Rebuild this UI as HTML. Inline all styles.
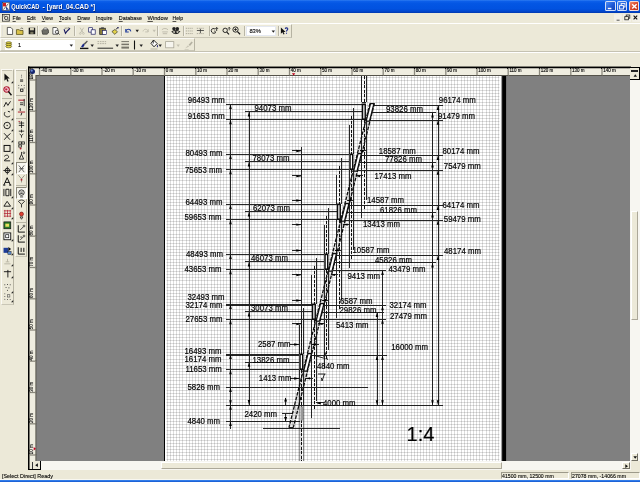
<!DOCTYPE html>
<html lang="en"><head><meta charset="utf-8"><title>QuickCAD - [yard_04.CAD *]</title>
<style>
html,body{margin:0;padding:0}
body{width:640px;height:482px;overflow:hidden;background:#ece9d8;position:relative;font-family:"Liberation Sans", sans-serif;color:#000}
#root{position:absolute;left:0;top:0;width:640px;height:482px;overflow:hidden;will-change:transform;background:#ece9d8}
.abs{position:absolute}
#title{left:0;top:0;width:640px;height:12.6px;background:linear-gradient(#2f7df2 0,#0c5fea 10%,#0356e4 28%,#0152e0 68%,#0248cf 86%,#0138ae 100%)}
#title .t{position:absolute;left:10.6px;top:1.9px;font-size:6.35px;font-weight:bold;color:#fff;white-space:nowrap;line-height:8px;text-shadow:.4px .4px 0 #0a246a}
.wb{position:absolute;top:1.2px;width:10.4px;height:10.2px;border-radius:1.6px;border:.5px solid rgba(255,255,255,.8);box-sizing:border-box;background:linear-gradient(135deg,#4b8df6,#1c56d4 60%,#1445b8)}
.wb.cl{background:linear-gradient(135deg,#ee8a6c,#d8452a 55%,#b5301a)}
#menubar{left:0;top:12.6px;width:640px;height:10px;background:#ece9d8}
.mi{position:absolute;top:1.7px;font-size:5.55px;line-height:7px;white-space:nowrap;-webkit-text-stroke:.12px #000}
.mi u{text-decoration-thickness:.35px;text-underline-offset:.5px;text-decoration-color:#444}
.ic{position:absolute;overflow:visible}
.hline{position:absolute;left:0;width:640px;height:.6px}
.tbx{position:absolute;box-sizing:border-box;border-right:.6px solid #b6b3a2;border-bottom:.6px solid #c9c6b6;border-top:.5px solid #fbfaf5;border-left:.5px solid #fbfaf5}
.sep{position:absolute;width:.6px;height:10.4px;background:#b9b6a6;box-shadow:.6px 0 0 #fbfaf5}
.grip{position:absolute;width:1.2px;height:10.6px;background:#c4c1b0;box-shadow:.5px 0 0 #fff inset}
.combo{position:absolute;background:#fff;border:.5px solid #cfd6e4;box-sizing:border-box}
.btn3{position:absolute;box-sizing:border-box;background:#ece9d8;border-top:.6px solid #fff;border-left:.6px solid #fff;border-right:.6px solid #716f64;border-bottom:.6px solid #716f64}
.st{position:absolute;font-size:5.5px;line-height:7px;white-space:nowrap;-webkit-text-stroke:.1px #000}
.sunk{position:absolute;box-sizing:border-box;border-top:.6px solid #9d9a8a;border-left:.6px solid #9d9a8a;border-right:.6px solid #fff;border-bottom:.6px solid #fff;height:7.6px;top:471.8px}
</style></head><body><div id="root">
<div id="title" class="abs"><svg class="ic" style="left:0;top:0" width="120" height="13" viewBox="0 0 120 13"><g font-family='"Liberation Sans", sans-serif' font-size="6.9" font-weight="bold"><g fill="#0a246a" transform="translate(.45 .45)"><text x="11.2" y="9.45" textLength="28.3" lengthAdjust="spacingAndGlyphs">QuickCAD</text><text x="42.5" y="9.45">-</text><text x="46.8" y="9.45" textLength="48.4" lengthAdjust="spacingAndGlyphs">[yard_04.CAD *]</text></g><g fill="#fff"><text x="11.2" y="9.45" textLength="28.3" lengthAdjust="spacingAndGlyphs">QuickCAD</text><text x="42.5" y="9.45">-</text><text x="46.8" y="9.45" textLength="48.4" lengthAdjust="spacingAndGlyphs">[yard_04.CAD *]</text></g></g></svg>
<svg class="ic" style="left:1.5px;top:2px" width="8" height="9" viewBox="0 0 8 9"><rect x=".3" y=".3" width="7.4" height="8.2" fill="#f4f4f4" stroke="#223" stroke-width=".5"/><path d="M1 1h3v3.4h-3z" fill="#d02020"/><path d="M4 4.4l3 3.4h-3z" fill="#204090"/><path d="M1.4 7.6l5-6" stroke="#333" stroke-width=".7"/></svg>
<div class="wb" style="left:605.3px"><svg width="9" height="9" viewBox="0 0 9 9" style="position:absolute;left:0;top:0"><rect x="1.8" y="5.8" width="3.6" height="1.4" fill="#fff"/></svg></div>
<div class="wb" style="left:617.1px"><svg width="9" height="9" viewBox="0 0 9 9" style="position:absolute;left:0;top:0"><rect x="3.2" y="1.6" width="3.8" height="3.4" fill="none" stroke="#fff" stroke-width=".9"/><rect x="1.6" y="3.6" width="3.8" height="3.4" fill="#2a62da" stroke="#fff" stroke-width=".9"/></svg></div>
<div class="wb cl" style="left:628.7px"><svg width="9" height="9" viewBox="0 0 9 9" style="position:absolute;left:0;top:0"><path d="M2.2 2.2l4.4 4.4M6.6 2.2l-4.4 4.4" stroke="#fff" stroke-width="1.4"/></svg></div>
</div>
<div id="menubar" class="abs">
<svg class="ic" style="left:2.2px;top:1.2px" width="8" height="8" viewBox="0 0 8 8"><rect x=".4" y=".6" width="7.2" height="6.6" fill="#e9e7da" stroke="#222" stroke-width=".7"/><circle cx="4.2" cy="4" r="1.7" fill="none" stroke="#222" stroke-width=".8"/><path d="M1.4 2h1.4M5.6 6h1.2" stroke="#222" stroke-width=".7"/></svg>
<svg class="ic" style="left:0;top:-12.6px" width="200" height="24" viewBox="0 0 200 24"><g font-family='"Liberation Sans", sans-serif' font-size="6.1" fill="#000" stroke="#000" stroke-width=".1"><text x="12.6" y="20.2" textLength="8.4" lengthAdjust="spacingAndGlyphs"><tspan text-decoration="underline">F</tspan>ile</text><text x="27.0" y="20.2" textLength="8.7" lengthAdjust="spacingAndGlyphs"><tspan text-decoration="underline">E</tspan>dit</text><text x="41.8" y="20.2" textLength="11.2" lengthAdjust="spacingAndGlyphs"><tspan text-decoration="underline">V</tspan>iew</text><text x="59.0" y="20.2" textLength="12.0" lengthAdjust="spacingAndGlyphs"><tspan text-decoration="underline">T</tspan>ools</text><text x="77.2" y="20.2" textLength="12.8" lengthAdjust="spacingAndGlyphs"><tspan text-decoration="underline">D</tspan>raw</text><text x="96.0" y="20.2" textLength="16.6" lengthAdjust="spacingAndGlyphs"><tspan text-decoration="underline">I</tspan>nquire</text><text x="118.8" y="20.2" textLength="23.2" lengthAdjust="spacingAndGlyphs"><tspan text-decoration="underline">D</tspan>atabase</text><text x="147.5" y="20.2" textLength="20.3" lengthAdjust="spacingAndGlyphs"><tspan text-decoration="underline">W</tspan>indow</text><text x="172.6" y="20.2" textLength="10.5" lengthAdjust="spacingAndGlyphs"><tspan text-decoration="underline">H</tspan>elp</text></g></svg>
<svg class="ic" style="left:614px;top:1.2px" width="26" height="8" viewBox="0 0 26 8"><rect x="0" y=".2" width="7.8" height="7.6" fill="#f3f1e8"/><rect x="9" y=".2" width="8" height="7.6" fill="#f3f1e8"/><rect x="18.2" y=".2" width="7.8" height="7.6" fill="#f3f1e8"/><path d="M2.6 6.2h3" stroke="#555" stroke-width="1"/><rect x="12.2" y="1" width="3.6" height="3.2" fill="none" stroke="#222" stroke-width=".8"/><rect x="10.8" y="2.6" width="3.6" height="3.2" fill="#ece9d8" stroke="#222" stroke-width=".8"/><path d="M19.6 1.6l3.6 3.8M23.2 1.6l-3.6 3.8" stroke="#111" stroke-width="1.1"/></svg>
</div>
<div class="hline" style="top:22.5px;background:#c5c2b2"></div><div class="hline" style="top:23.1px;background:#fff"></div>
<div class="hline" style="top:37.4px;background:#d6d3c4;width:292px"></div>
<div class="hline" style="top:51px;background:#c5c2b2"></div><div class="hline" style="top:51.6px;background:#fff"></div>
<div class="tbx" style="left:0;top:23.8px;width:292px;height:13.8px"></div>
<div class="tbx" style="left:0;top:38px;width:194.5px;height:13px"></div>
<div class="grip" style="left:1.6px;top:25.4px"></div><div class="grip" style="left:1.6px;top:39.4px"></div>
<div class="sep" style="left:37.4px;top:25.6px"></div><div class="sep" style="left:74.2px;top:25.6px"></div><div class="sep" style="left:121.2px;top:25.6px"></div>
<div class="sep" style="left:157.4px;top:25.6px"></div><div class="sep" style="left:182.8px;top:25.6px"></div><div class="sep" style="left:208.6px;top:25.6px"></div>
<div class="sep" style="left:243.6px;top:25.6px"></div><div class="sep" style="left:277.8px;top:25.6px"></div>

<div class="combo" style="left:245.8px;top:26px;width:30px;height:10px;border-color:#e4e8f0"><span class="st" style="left:2.6px;top:1.3px;font-size:5.8px">83%</span><svg class="ic" style="left:24px;top:3.4px" width="5" height="4" viewBox="0 0 5 4"><path d="M.6.6h3.4l-1.7 2.2z" fill="#222"/></svg></div>
<div class="combo" style="left:4.6px;top:40px;width:70.4px;height:10px;border-color:#fff"><span class="st" style="left:12.4px;top:1.2px">1</span><svg class="ic" style="left:63.4px;top:3.4px" width="5" height="4" viewBox="0 0 5 4"><path d="M.6.6h3.4l-1.7 2.2z" fill="#222"/></svg></div>
<svg class="ic" style="left:6.4px;top:26.6px" width="7.92" height="7.92" viewBox="0 0 9 9"><path d="M1.5 .5h4l2 2v6h-6z" fill="#fff" stroke="#222" stroke-width=".8"/></svg><svg class="ic" style="left:15.6px;top:26.6px" width="7.92" height="7.92" viewBox="0 0 9 9"><path d="M.5 3h3l1 1h3.5v4.5h-7.5z" fill="#d9c24a" stroke="#4a4410" stroke-width=".8"/><path d="M5 2.2c1-1.4 2.4-1.2 3 .2" fill="none" stroke="#222" stroke-width=".7"/></svg><svg class="ic" style="left:27.6px;top:26.6px" width="7.92" height="7.92" viewBox="0 0 9 9"><rect x=".8" y=".8" width="7.4" height="7.4" fill="#1c1c1c"/><rect x="2.3" y="1" width="4.4" height="2.8" fill="#d6d2b8"/><rect x="2.6" y="5.4" width="3.6" height="2.6" fill="#77745e"/></svg><svg class="ic" style="left:41.2px;top:26.6px" width="7.92" height="7.92" viewBox="0 0 9 9"><path d="M1 4.2l2-2h4.5l1 1.6v3l-1.6 1.4h-5z" fill="#6e6e66" stroke="#222" stroke-width=".7"/><path d="M2.6 3l1-2h3l.6 2z" fill="#eee" stroke="#222" stroke-width=".5"/></svg><svg class="ic" style="left:52.3px;top:26.6px" width="7.92" height="7.92" viewBox="0 0 9 9"><path d="M1 .6h4l1.6 1.6v6h-5.6z" fill="#fff" stroke="#222" stroke-width=".8"/><circle cx="5.6" cy="5.6" r="1.9" fill="#e8e8e8" stroke="#222" stroke-width=".8"/><path d="M7 7l1.6 1.6" stroke="#222" stroke-width="1"/></svg><svg class="ic" style="left:63.3px;top:26.6px" width="7.92" height="7.92" viewBox="0 0 9 9"><path d="M1.2 2.6l1.6 4.6 1.6-2.2 3.6-3.6" fill="none" stroke="#1b1b60" stroke-width="1.3"/><path d="M2 1.4h1M4 1.2h1M6 1h1" stroke="#222" stroke-width=".9"/></svg><svg class="ic" style="left:78.2px;top:26.6px" width="7.92" height="7.92" viewBox="0 0 9 9"><path d="M2.4.8l3.6 6M6.4.8l-3.6 6" stroke="#b8b5a6" stroke-width=".9"/><circle cx="2.6" cy="7.4" r="1" fill="none" stroke="#b8b5a6" stroke-width=".7"/><circle cx="6.2" cy="7.4" r="1" fill="none" stroke="#b8b5a6" stroke-width=".7"/></svg><svg class="ic" style="left:87.8px;top:26.6px" width="7.92" height="7.92" viewBox="0 0 9 9"><rect x=".8" y=".8" width="4.4" height="5" fill="#fff" stroke="#1b1b60" stroke-width=".8"/><rect x="3.6" y="3.2" width="4.6" height="5" fill="#fff" stroke="#1b1b60" stroke-width=".8"/></svg><svg class="ic" style="left:98.8px;top:26.6px" width="7.92" height="7.92" viewBox="0 0 9 9"><rect x=".8" y="1.4" width="6.4" height="7" fill="#8a7e3a" stroke="#222" stroke-width=".8"/><rect x="2.4" y=".4" width="3.2" height="1.8" fill="#444"/><rect x="4" y="4" width="4.4" height="4.6" fill="#fff" stroke="#1b1b60" stroke-width=".7"/></svg><svg class="ic" style="left:111px;top:26.6px" width="7.92" height="7.92" viewBox="0 0 9 9"><path d="M1 5.2l3.4-2.4 3 2.6-3 3z" fill="#e4d34a" stroke="#222" stroke-width=".7"/><path d="M5.6 2.6l2.4-2" stroke="#222" stroke-width="1"/><circle cx="8" cy=".9" r=".9" fill="#1b1b60"/></svg><svg class="ic" style="left:123.6px;top:26.6px" width="7.92" height="7.92" viewBox="0 0 9 9"><path d="M2 2.4v3.2h3.4M2 5.4c.8-3.6 5.2-3.6 5.8-.4" fill="none" stroke="#203c9c" stroke-width="1.2"/></svg><svg class="ic" style="left:134.5px;top:29px" width="5" height="4" viewBox="0 0 5 4"><path d="M.5 .8h3.4l-1.7 2.4z" fill="#222"/></svg><svg class="ic" style="left:142.3px;top:26.6px" width="7.92" height="7.92" viewBox="0 0 9 9"><path d="M7 2.4v3.2h-3.4M7 5.4c-.8-3.6-5.2-3.6-5.8-.4" fill="none" stroke="#c5c2b2" stroke-width="1.1"/></svg><svg class="ic" style="left:152px;top:29px" width="5" height="4" viewBox="0 0 5 4"><path d="M.5 .8h3.4l-1.7 2.4z" fill="#c5c2b2"/></svg><svg class="ic" style="left:160.6px;top:26.6px" width="7.92" height="7.92" viewBox="0 0 9 9"><path d="M1 3.2c1.4-2 5.4-2 7 0M1.4 5.6h6.4M2 7.6h5" fill="none" stroke="#b5b2a2" stroke-width=".9"/></svg><svg class="ic" style="left:170.6px;top:25.6px" width="9.68" height="8.8" viewBox="0 0 11 10"><circle cx="3.4" cy="3" r="2" fill="#222"/><circle cx="7.2" cy="3" r="2" fill="#222"/><path d="M1 6.4c2-1.6 7-1.6 9 0c-2 3-7 3-9 0z" fill="none" stroke="#111" stroke-width="1.1"/><circle cx="5.4" cy="7" r="1.2" fill="#222"/></svg><svg class="ic" style="left:184.9px;top:26.6px" width="8.8" height="7.92" viewBox="0 0 10 9"><path d="M1 1.5h8M1 4.5h8M1 7.5h8" stroke="#6a685c" stroke-width=".8" stroke-dasharray=".9 1.3"/></svg><svg class="ic" style="left:196px;top:26.6px" width="8.8" height="7.92" viewBox="0 0 10 9"><path d="M1 1.5h8M1 7.5h8" stroke="#6a685c" stroke-width=".8" stroke-dasharray=".9 1.3"/><path d="M1 4h8M5 2v5" stroke="#333" stroke-width=".9"/></svg><svg class="ic" style="left:210px;top:26.6px" width="8.8" height="7.92" viewBox="0 0 10 9"><path d="M1.4 4c0-2.4 3.4-3 4.4-1.4M1.4 4c0 2.8 3 4 4.8 2.6l-.8-2.4" fill="none" stroke="#111" stroke-width="1"/><path d="M7.6.6v4M6 2.2l1.6-1.6 1.6 1.6" fill="none" stroke="#111" stroke-width=".9"/></svg><svg class="ic" style="left:221.6px;top:26.6px" width="8.8" height="7.92" viewBox="0 0 10 9"><circle cx="3.6" cy="3.8" r="2.5" fill="none" stroke="#111" stroke-width="1"/><path d="M5.4 5.8l2.6 2.6" stroke="#111" stroke-width="1.2"/><path d="M8.2.4v3.4M6.8 1.8l1.4-1.4 1.2 1.4" fill="none" stroke="#111" stroke-width=".8"/></svg><svg class="ic" style="left:232.2px;top:26.1px" width="8.8" height="8.8" viewBox="0 0 10 10"><circle cx="4" cy="4" r="3" fill="none" stroke="#111" stroke-width="1"/><path d="M2.4 4h3.2M4 2.4v3.2" stroke="#111" stroke-width=".9"/><path d="M6.2 6.4l3 3" stroke="#111" stroke-width="1.4"/></svg><svg class="ic" style="left:280.4px;top:26.6px" width="8.8" height="7.92" viewBox="0 0 10 9"><path d="M1 .6v7l1.8-1.6 1.2 2.6 1.2-.6-1.2-2.4h2.4z" fill="#111"/><path d="M6 2.2c.2-1.6 3-1.6 2.8.2c-.2 1.2-1.4 1.2-1.4 2.6M7.4 6.6v1.2" fill="none" stroke="#1b2a8a" stroke-width="1.2"/></svg><svg class="ic" style="left:5.2px;top:41.1px" width="7.4" height="7.4" viewBox="0 0 9 9"><ellipse cx="4.5" cy="2.4" rx="3.6" ry="1.5" fill="#e6d84c" stroke="#3a3608" stroke-width=".7"/><ellipse cx="4.5" cy="4.6" rx="3.6" ry="1.5" fill="#e6d84c" stroke="#3a3608" stroke-width=".7"/><ellipse cx="4.5" cy="6.8" rx="3.6" ry="1.5" fill="#e6d84c" stroke="#3a3608" stroke-width=".7"/></svg><svg class="ic" style="left:79px;top:39.5px" width="11" height="10" viewBox="0 0 11 10"><path d="M1 8.4h8.4" stroke="#111" stroke-width="1.4"/><path d="M2 6.8l2.2-3.2 1.6 1.2-1.8 2.6z" fill="#1b2a8a"/><path d="M4.6 3.8l3.4-3.2.8.8-3 3.4z" fill="#555"/></svg><svg class="ic" style="left:90.4px;top:43.5px" width="5" height="4" viewBox="0 0 5 4"><path d="M.5 .6h3.4l-1.7 2.4z" fill="#222"/></svg><svg class="ic" style="left:114.6px;top:43.5px" width="5" height="4" viewBox="0 0 5 4"><path d="M.5 .6h3.4l-1.7 2.4z" fill="#222"/></svg><svg class="ic" style="left:139.2px;top:43.5px" width="5" height="4" viewBox="0 0 5 4"><path d="M.5 .6h3.4l-1.7 2.4z" fill="#222"/></svg><svg class="ic" style="left:158.4px;top:43.5px" width="5" height="4" viewBox="0 0 5 4"><path d="M.5 .6h3.4l-1.7 2.4z" fill="#222"/></svg><svg class="ic" style="left:176px;top:43.5px" width="5" height="4" viewBox="0 0 5 4"><path d="M.5 .6h3.4l-1.7 2.4z" fill="#c5c2b2"/></svg><svg class="ic" style="left:96.5px;top:40.0px" width="17" height="10" viewBox="0 0 17 10"><path d="M.5 1.6h8.6M.5 3.6h8.6" stroke="#a5a294" stroke-width=".8" stroke-dasharray="1.6 .8"/><path d="M.5 8.2h15.6" stroke="#111" stroke-width=".9"/></svg><svg class="ic" style="left:121px;top:40.0px" width="9" height="10" viewBox="0 0 9 10"><path d="M.4 1.6h7.6" stroke="#77756a" stroke-width="1"/><path d="M.4 4.4h7.6" stroke="#77756a" stroke-width="1.5"/><path d="M.4 7.6h7.6" stroke="#77756a" stroke-width="2"/></svg><svg class="ic" style="left:133px;top:39.5px" width="3" height="10" viewBox="0 0 3 10"><path d="M1.5 .5v9" stroke="#111" stroke-width="1.1"/></svg><svg class="ic" style="left:149.5px;top:39.0px" width="9" height="11" viewBox="0 0 9 11"><path d="M3.6 1l3.6 3.6-3.2 3.2-3-3.4z" fill="#fff" stroke="#111" stroke-width=".9"/><path d="M3.4 1.2l-.2 3.4" stroke="#111" stroke-width=".8"/><path d="M7.4 5.4c.8 1.2.8 2.4 0 3c-.8-.6-.8-1.8 0-3z" fill="#2a2a7a"/><path d="M.5 10h7" stroke="#b9b6a6" stroke-width="1"/></svg><svg class="ic" style="left:165px;top:41.0px" width="11" height="8" viewBox="0 0 11 8"><rect x=".6" y=".6" width="8.2" height="6.2" fill="#f6f5ee" stroke="#aaa798" stroke-width=".8"/></svg><svg class="ic" style="left:183.5px;top:40.0px" width="10" height="10" viewBox="0 0 10 10"><path d="M1 8.6l3-3.4 1.2 1.2z" fill="#c9c6b6"/><path d="M4.6 4.8l3-3.4 1.2 1-2.8 3.6z" fill="#b5b2a2"/><path d="M.6 9.6h4" stroke="#c9c6b6" stroke-width=".8"/></svg>
<div class="tbx" style="left:.6px;top:68.6px;width:13px;height:236px"></div>
<div class="tbx" style="left:14.8px;top:68.6px;width:12.6px;height:188px"></div>
<div class="hline" style="left:2px;top:70.4px;width:10px;background:#c4c1b0"></div><div class="hline" style="left:16px;top:70.4px;width:10px;background:#c4c1b0"></div>
<div class="hline" style="left:16px;top:95px;width:10px;background:#b9b6a6"></div>
<div class="hline" style="left:16px;top:117.8px;width:10px;background:#b9b6a6"></div>
<div class="hline" style="left:16px;top:185.2px;width:10px;background:#b9b6a6"></div>
<div class="hline" style="left:16px;top:221.6px;width:10px;background:#b9b6a6"></div>
<div class="hline" style="left:2px;top:98px;width:10px;background:#b9b6a6"></div>
<div class="btn3" style="left:15.6px;top:162.4px;width:11.4px;height:11.6px;border-color:#8a8778 #fff #fff #8a8778;background:#f6f5ee"></div>
<div class="btn3" style="left:15.6px;top:187px;width:11.4px;height:11.8px;border-color:#8a8778 #fff #fff #8a8778;background:#f6f5ee"></div>
<svg class="ic" style="left:3.2px;top:72.55px" width="9.0" height="9.9" viewBox="0 0 10 11"><path d="M1.6.6v8l2-1.8 1.4 3 1.3-.6-1.4-3h2.7z" fill="#111"/></svg><svg class="ic" style="left:2.6px;top:85.55px" width="9.0" height="9.9" viewBox="0 0 10 11"><circle cx="4" cy="3.8" r="3" fill="#fff" stroke="#b01830" stroke-width="1.3"/><rect x="2.4" y="2.6" width="2.6" height="2.4" fill="#c02040"/><path d="M6 6.2l3.4 4" stroke="#111" stroke-width="1.6"/></svg><svg class="ic" style="left:2.6px;top:100.0px" width="9.0" height="9.0" viewBox="0 0 10 10"><path d="M1 7.6l2.4-5 2 3.4 3-4.6" fill="none" stroke="#111" stroke-width="1"/></svg><svg class="ic" style="left:2.6px;top:110.3px" width="9.0" height="9.0" viewBox="0 0 10 10"><path d="M2.4 2.2c-3 3.4 2 7.6 5.6 4.2M5.4 1.4l2.4.8" fill="none" stroke="#111" stroke-width="1"/></svg><svg class="ic" style="left:2.6px;top:121.1px" width="9.0" height="9.0" viewBox="0 0 10 10"><circle cx="4.6" cy="5" r="3.6" fill="none" stroke="#111" stroke-width="1"/><circle cx="4.6" cy="5" r=".7" fill="#111"/></svg><svg class="ic" style="left:2.6px;top:132.1px" width="9.0" height="9.0" viewBox="0 0 10 10"><path d="M1.2 1.4l6.6 7.2M1.4 8.6l3-3.6 4-3.4" fill="none" stroke="#111" stroke-width="1"/></svg><svg class="ic" style="left:2.6px;top:143.5px" width="9.0" height="9.0" viewBox="0 0 10 10"><rect x="1.2" y="1.6" width="6.6" height="6.6" fill="none" stroke="#111" stroke-width="1.1"/></svg><svg class="ic" style="left:2.6px;top:154.0px" width="9.0" height="9.0" viewBox="0 0 10 10"><path d="M1.4 2.6c2.4-2.4 5.6-1.2 4.6 1.4c-.8 2-4.6 1-4.4 3.6h6.4" fill="none" stroke="#111" stroke-width="1"/></svg><svg class="ic" style="left:2.6px;top:165.5px" width="9.0" height="9.0" viewBox="0 0 10 10"><circle cx="4.8" cy="5" r="2.5" fill="none" stroke="#111" stroke-width="1"/><path d="M4.8.6v8.8M.4 5h8.8" stroke="#111" stroke-width=".9"/></svg><svg class="ic" style="left:2.6px;top:176.5px" width="9.0" height="9.0" viewBox="0 0 10 10"><path d="M1 9l3.6-8.2 3.6 8.2M2.4 6h4.6M.2 9h2.4M6.8 9h2.4" fill="none" stroke="#111" stroke-width="1.1"/></svg><svg class="ic" style="left:2.6px;top:188.0px" width="9.0" height="9.0" viewBox="0 0 10 10"><path d="M1 1v8M8.6 1v8M3.2 1.4h3.4v7.2h-3.4z" fill="none" stroke="#111" stroke-width="1"/></svg><svg class="ic" style="left:2.6px;top:199.25px" width="9.0" height="9.0" viewBox="0 0 10 10"><path d="M1 8l3.6-5.4 3.8 5.4z" fill="none" stroke="#111" stroke-width="1"/></svg><svg class="ic" style="left:2.6px;top:209.25px" width="9.0" height="9.0" viewBox="0 0 10 10"><path d="M1 2h8M1 5h8M1 8h8M2 1v8M5 1v8M8 1v8" stroke="#b02030" stroke-width=".8"/></svg><svg class="ic" style="left:2.6px;top:220.5px" width="9.0" height="9.0" viewBox="0 0 10 10"><rect x="1" y="1" width="7.6" height="7.6" fill="#2a7a2a" stroke="#111" stroke-width=".8"/><rect x="2.6" y="3" width="4.2" height="3.4" fill="#e8e060"/></svg><svg class="ic" style="left:2.6px;top:231.5px" width="9.0" height="9.0" viewBox="0 0 10 10"><rect x="1" y="1" width="7.6" height="7.6" fill="#fff" stroke="#111" stroke-width="1"/><rect x="3" y="3" width="3.4" height="3.4" fill="none" stroke="#111" stroke-width=".8"/></svg><svg class="ic" style="left:2.6px;top:245.5px" width="9.0" height="9.0" viewBox="0 0 10 10"><rect x=".6" y="2" width="5.4" height="5.6" fill="#1e3c96"/><path d="M6 1l3 2.4-3 2.4z" fill="#111"/><rect x="5.4" y="6" width="3.6" height="3.4" fill="#5a8ad0" stroke="#111" stroke-width=".5"/></svg><svg class="ic" style="left:2.6px;top:256.5px" width="9.0" height="9.0" viewBox="0 0 10 10"><path d="M1.4 7.6h7M3 5.4h4M5 2v3.4" stroke="#b5b2a2" stroke-width="1"/></svg><svg class="ic" style="left:2.6px;top:268.5px" width="9.0" height="9.0" viewBox="0 0 10 10"><path d="M1 3h8M5.4 1v8.4" stroke="#111" stroke-width="1"/></svg><svg class="ic" style="left:2.6px;top:283.0px" width="9.0" height="9.0" viewBox="0 0 10 10"><path d="M2 2h.01M5 1.6h.01M8 2h.01M3.4 5h.01M6.6 5.4h.01M5 8h.01" stroke="#333" stroke-width="1.2" stroke-linecap="round"/></svg><svg class="ic" style="left:2.6px;top:292.0px" width="9.0" height="9.0" viewBox="0 0 10 10"><path d="M2 2h.01M2 5h.01M2 8h.01M5 8.4h.01M8 8.4h.01" stroke="#555" stroke-width="1.2" stroke-linecap="round"/><rect x="5" y="3" width="2.6" height="2.6" fill="none" stroke="#555" stroke-width=".7"/></svg><svg class="ic" style="left:11.2px;top:80.9px" width="3" height="3" viewBox="0 0 3 3"><path d="M2.2 0v2.2h-2.2z" fill="#222"/></svg><svg class="ic" style="left:11.2px;top:107.9px" width="3" height="3" viewBox="0 0 3 3"><path d="M2.2 0v2.2h-2.2z" fill="#222"/></svg><svg class="ic" style="left:11.2px;top:118.2px" width="3" height="3" viewBox="0 0 3 3"><path d="M2.2 0v2.2h-2.2z" fill="#222"/></svg><svg class="ic" style="left:11.2px;top:129.0px" width="3" height="3" viewBox="0 0 3 3"><path d="M2.2 0v2.2h-2.2z" fill="#222"/></svg><svg class="ic" style="left:11.2px;top:140.0px" width="3" height="3" viewBox="0 0 3 3"><path d="M2.2 0v2.2h-2.2z" fill="#222"/></svg><svg class="ic" style="left:11.2px;top:151.4px" width="3" height="3" viewBox="0 0 3 3"><path d="M2.2 0v2.2h-2.2z" fill="#222"/></svg><svg class="ic" style="left:11.2px;top:161.9px" width="3" height="3" viewBox="0 0 3 3"><path d="M2.2 0v2.2h-2.2z" fill="#222"/></svg><svg class="ic" style="left:11.2px;top:173.4px" width="3" height="3" viewBox="0 0 3 3"><path d="M2.2 0v2.2h-2.2z" fill="#222"/></svg><svg class="ic" style="left:11.2px;top:195.9px" width="3" height="3" viewBox="0 0 3 3"><path d="M2.2 0v2.2h-2.2z" fill="#222"/></svg><svg class="ic" style="left:11.2px;top:207.15px" width="3" height="3" viewBox="0 0 3 3"><path d="M2.2 0v2.2h-2.2z" fill="#222"/></svg><svg class="ic" style="left:11.2px;top:217.15px" width="3" height="3" viewBox="0 0 3 3"><path d="M2.2 0v2.2h-2.2z" fill="#222"/></svg><svg class="ic" style="left:11.2px;top:239.4px" width="3" height="3" viewBox="0 0 3 3"><path d="M2.2 0v2.2h-2.2z" fill="#222"/></svg><svg class="ic" style="left:11.2px;top:253.4px" width="3" height="3" viewBox="0 0 3 3"><path d="M2.2 0v2.2h-2.2z" fill="#222"/></svg><svg class="ic" style="left:11.2px;top:264.4px" width="3" height="3" viewBox="0 0 3 3"><path d="M2.2 0v2.2h-2.2z" fill="#222"/></svg><svg class="ic" style="left:11.2px;top:276.4px" width="3" height="3" viewBox="0 0 3 3"><path d="M2.2 0v2.2h-2.2z" fill="#222"/></svg><svg class="ic" style="left:11.2px;top:290.9px" width="3" height="3" viewBox="0 0 3 3"><path d="M2.2 0v2.2h-2.2z" fill="#222"/></svg><svg class="ic" style="left:11.2px;top:299.9px" width="3" height="3" viewBox="0 0 3 3"><path d="M2.2 0v2.2h-2.2z" fill="#222"/></svg><svg class="ic" style="left:16.599999999999998px;top:74.0px" width="9.0" height="9.0" viewBox="0 0 10 10"><path d="M5 1.4h.01M5 3.4h.01" stroke="#444" stroke-width="1" stroke-linecap="round"/><path d="M3.4 6.6h3.4M3.4 8h3.4" stroke="#111" stroke-width=".9"/></svg><svg class="ic" style="left:16.599999999999998px;top:83.5px" width="9.0" height="9.0" viewBox="0 0 10 10"><path d="M2 1.6h.01M5 1.6h.01M8 1.6h.01M2 4.4h.01M8 4.4h.01" stroke="#444" stroke-width="1.1" stroke-linecap="round"/><rect x="4" y="5.6" width="2.6" height="2.6" fill="none" stroke="#111" stroke-width=".9"/></svg><svg class="ic" style="left:16.599999999999998px;top:97.9px" width="9.0" height="9.0" viewBox="0 0 10 10"><path d="M1.4 2.4h7" stroke="#b02030" stroke-width="1.2"/><path d="M3.4 5.4h3.4M3.4 7.4h3.4M8 1v8" stroke="#111" stroke-width=".9"/></svg><svg class="ic" style="left:16.599999999999998px;top:107.2px" width="9.0" height="9.0" viewBox="0 0 10 10"><path d="M1 5.6h8" stroke="#b02030" stroke-width="1.1"/><path d="M3.6 1.4v3M5.4 6.4l-1 3" stroke="#111" stroke-width="1"/></svg><svg class="ic" style="left:16.599999999999998px;top:119.7px" width="9.0" height="9.0" viewBox="0 0 10 10"><path d="M2 3.4h6M2 6h6M5 1.4v7.6" stroke="#111" stroke-width=".9"/><path d="M1.6 1.6h2" stroke="#b02030" stroke-width=".9"/></svg><svg class="ic" style="left:16.599999999999998px;top:129.0px" width="9.0" height="9.0" viewBox="0 0 10 10"><path d="M2 2.4h6M5 .6v3.4M3 5.6l2 1.6 2-1.6M5 7.2v2.4" fill="none" stroke="#111" stroke-width=".9"/></svg><svg class="ic" style="left:16.599999999999998px;top:140.5px" width="9.0" height="9.0" viewBox="0 0 10 10"><rect x="2" y="1" width="3" height="2.4" fill="none" stroke="#111" stroke-width=".8"/><rect x="5.4" y="1" width="3" height="2.4" fill="none" stroke="#111" stroke-width=".8"/><rect x="2" y="4.4" width="3" height="2.4" fill="none" stroke="#111" stroke-width=".8"/><circle cx="4" cy="8.4" r="1.1" fill="#b02030"/></svg><svg class="ic" style="left:16.599999999999998px;top:151.0px" width="9.0" height="9.0" viewBox="0 0 10 10"><path d="M2.6 9l2.4-5.4 2.4 5.4zM5 3.6v-2.6" fill="none" stroke="#111" stroke-width=".9"/><circle cx="7.6" cy="2" r="1" fill="none" stroke="#111" stroke-width=".7"/></svg><svg class="ic" style="left:16.599999999999998px;top:163.5px" width="9.0" height="9.0" viewBox="0 0 10 10"><path d="M2 1.6l6 7.4M8 1.6l-6 7.4M2.6 5.2h4.8" fill="none" stroke="#444" stroke-width=".9"/></svg><svg class="ic" style="left:16.599999999999998px;top:174.25px" width="9.0" height="9.0" viewBox="0 0 10 10"><path d="M1.6 1.4l3.4 4 3.4-4M5 5.4v4" fill="none" stroke="#999684" stroke-width="1.1"/><circle cx="5" cy="6.4" r="1" fill="#b02030"/></svg><svg class="ic" style="left:16.599999999999998px;top:188.5px" width="9.0" height="9.0" viewBox="0 0 10 10"><circle cx="5" cy="4" r="3" fill="none" stroke="#111" stroke-width=".9"/><path d="M3.6 3.4h2.8M3.6 5h2.8M3.4 8.8h3.4" stroke="#111" stroke-width=".8"/></svg><svg class="ic" style="left:16.599999999999998px;top:199.25px" width="9.0" height="9.0" viewBox="0 0 10 10"><path d="M1.6 2.6c1.6-2 5.2-2 6.8 0l-3.4 3.4zM5 6v3.4" fill="none" stroke="#111" stroke-width=".9"/></svg><svg class="ic" style="left:16.599999999999998px;top:210.5px" width="9.0" height="9.0" viewBox="0 0 10 10"><circle cx="5" cy="3.4" r="2.2" fill="#e04030" stroke="#701010" stroke-width=".7"/><path d="M3.4 6.6l1.6 2.6 1.6-2.6z" fill="none" stroke="#111" stroke-width=".8"/></svg><svg class="ic" style="left:16.599999999999998px;top:224.25px" width="9.0" height="9.0" viewBox="0 0 10 10"><path d="M1.4 1.4v7.6h7.4" fill="none" stroke="#111" stroke-width="1.1"/><path d="M3.6 6.6l3.4-3.4" stroke="#111" stroke-width=".8"/><circle cx="7.8" cy="2.2" r="1" fill="none" stroke="#111" stroke-width=".7"/></svg><svg class="ic" style="left:16.599999999999998px;top:234.25px" width="9.0" height="9.0" viewBox="0 0 10 10"><path d="M1.4 1.4v7.6h7.4" fill="none" stroke="#111" stroke-width="1.1"/><path d="M3.6 6.6l3.4-3.4M3.6 3.4h2" stroke="#111" stroke-width=".8"/><circle cx="7.8" cy="2.2" r="1" fill="none" stroke="#111" stroke-width=".7"/></svg><svg class="ic" style="left:16.599999999999998px;top:245.5px" width="9.0" height="9.0" viewBox="0 0 10 10"><path d="M1.4 1.4v7.6h7.4M4.6 2v4.6M7.6 2v4.6" fill="none" stroke="#111" stroke-width="1.1"/></svg>
<div class="abs" style="left:36px;top:76px;width:595px;height:385.5px;overflow:hidden"><svg id="dwg" style="will-change:transform" width="595" height="385.5" viewBox="36 76 595 385.5">
<rect x="36" y="76" width="595" height="385.5" fill="#808080"/>
<rect x="164" y="76" width="337.25" height="386" fill="#fff"/>
<rect x="164" y="76" width="1" height="386" fill="#000"/>
<rect x="502.2" y="76" width="3.9" height="386" fill="#000"/>
<path d="M167.0 76h.5V462h-.5zM170.0 76h.5V462h-.5zM173.5 76h.5V462h-.5zM176.5 76h.5V462h-.5zM179.5 76h.5V462h-.5zM182.5 76h.5V462h-.5zM186.0 76h.5V462h-.5zM189.0 76h.5V462h-.5zM192.0 76h.5V462h-.5zM195.0 76h.5V462h-.5zM198.5 76h.5V462h-.5zM201.5 76h.5V462h-.5zM204.5 76h.5V462h-.5zM207.5 76h.5V462h-.5zM211.0 76h.5V462h-.5zM214.0 76h.5V462h-.5zM217.0 76h.5V462h-.5zM220.0 76h.5V462h-.5zM223.5 76h.5V462h-.5zM226.5 76h.5V462h-.5zM229.5 76h.5V462h-.5zM232.5 76h.5V462h-.5zM236.0 76h.5V462h-.5zM239.0 76h.5V462h-.5zM242.0 76h.5V462h-.5zM245.0 76h.5V462h-.5zM248.5 76h.5V462h-.5zM251.5 76h.5V462h-.5zM254.5 76h.5V462h-.5zM257.5 76h.5V462h-.5zM261.0 76h.5V462h-.5zM264.0 76h.5V462h-.5zM267.0 76h.5V462h-.5zM270.0 76h.5V462h-.5zM273.5 76h.5V462h-.5zM276.5 76h.5V462h-.5zM279.5 76h.5V462h-.5zM282.5 76h.5V462h-.5zM286.0 76h.5V462h-.5zM289.0 76h.5V462h-.5zM292.0 76h.5V462h-.5zM295.0 76h.5V462h-.5zM298.5 76h.5V462h-.5zM301.5 76h.5V462h-.5zM304.5 76h.5V462h-.5zM307.5 76h.5V462h-.5zM311.0 76h.5V462h-.5zM314.0 76h.5V462h-.5zM317.0 76h.5V462h-.5zM320.0 76h.5V462h-.5zM323.5 76h.5V462h-.5zM326.5 76h.5V462h-.5zM329.5 76h.5V462h-.5zM332.5 76h.5V462h-.5zM336.0 76h.5V462h-.5zM339.0 76h.5V462h-.5zM342.0 76h.5V462h-.5zM345.0 76h.5V462h-.5zM348.5 76h.5V462h-.5zM351.5 76h.5V462h-.5zM354.5 76h.5V462h-.5zM357.5 76h.5V462h-.5zM361.0 76h.5V462h-.5zM364.0 76h.5V462h-.5zM367.0 76h.5V462h-.5zM370.0 76h.5V462h-.5zM373.5 76h.5V462h-.5zM376.5 76h.5V462h-.5zM379.5 76h.5V462h-.5zM382.5 76h.5V462h-.5zM386.0 76h.5V462h-.5zM389.0 76h.5V462h-.5zM392.0 76h.5V462h-.5zM395.0 76h.5V462h-.5zM398.5 76h.5V462h-.5zM401.5 76h.5V462h-.5zM404.5 76h.5V462h-.5zM407.5 76h.5V462h-.5zM411.0 76h.5V462h-.5zM414.0 76h.5V462h-.5zM417.0 76h.5V462h-.5zM420.0 76h.5V462h-.5zM423.5 76h.5V462h-.5zM426.5 76h.5V462h-.5zM429.5 76h.5V462h-.5zM432.5 76h.5V462h-.5zM436.0 76h.5V462h-.5zM439.0 76h.5V462h-.5zM442.0 76h.5V462h-.5zM445.0 76h.5V462h-.5zM448.5 76h.5V462h-.5zM451.5 76h.5V462h-.5zM454.5 76h.5V462h-.5zM457.5 76h.5V462h-.5zM461.0 76h.5V462h-.5zM464.0 76h.5V462h-.5zM467.0 76h.5V462h-.5zM470.0 76h.5V462h-.5zM473.5 76h.5V462h-.5zM476.5 76h.5V462h-.5zM479.5 76h.5V462h-.5zM482.5 76h.5V462h-.5zM486.0 76h.5V462h-.5zM489.0 76h.5V462h-.5zM492.0 76h.5V462h-.5zM495.0 76h.5V462h-.5zM498.5 76h.5V462h-.5z" fill="#000" fill-opacity=".27"/>
<path d="M166.5 459.0v.5H499.45v-.5zM166.5 455.5v.5H499.45v-.5zM166.5 452.5v.5H499.45v-.5zM166.5 449.5v.5H499.45v-.5zM166.5 446.5v.5H499.45v-.5zM166.5 443.0v.5H499.45v-.5zM166.5 440.0v.5H499.45v-.5zM166.5 437.0v.5H499.45v-.5zM166.5 434.0v.5H499.45v-.5zM166.5 430.5v.5H499.45v-.5zM166.5 427.5v.5H499.45v-.5zM166.5 424.5v.5H499.45v-.5zM166.5 421.5v.5H499.45v-.5zM166.5 418.0v.5H499.45v-.5zM166.5 415.0v.5H499.45v-.5zM166.5 412.0v.5H499.45v-.5zM166.5 409.0v.5H499.45v-.5zM166.5 405.5v.5H499.45v-.5zM166.5 402.5v.5H499.45v-.5zM166.5 399.5v.5H499.45v-.5zM166.5 396.5v.5H499.45v-.5zM166.5 393.0v.5H499.45v-.5zM166.5 390.0v.5H499.45v-.5zM166.5 387.0v.5H499.45v-.5zM166.5 384.0v.5H499.45v-.5zM166.5 380.5v.5H499.45v-.5zM166.5 377.5v.5H499.45v-.5zM166.5 374.5v.5H499.45v-.5zM166.5 371.5v.5H499.45v-.5zM166.5 368.0v.5H499.45v-.5zM166.5 365.0v.5H499.45v-.5zM166.5 362.0v.5H499.45v-.5zM166.5 359.0v.5H499.45v-.5zM166.5 355.5v.5H499.45v-.5zM166.5 352.5v.5H499.45v-.5zM166.5 349.5v.5H499.45v-.5zM166.5 346.5v.5H499.45v-.5zM166.5 343.0v.5H499.45v-.5zM166.5 340.0v.5H499.45v-.5zM166.5 337.0v.5H499.45v-.5zM166.5 334.0v.5H499.45v-.5zM166.5 330.5v.5H499.45v-.5zM166.5 327.5v.5H499.45v-.5zM166.5 324.5v.5H499.45v-.5zM166.5 321.5v.5H499.45v-.5zM166.5 318.0v.5H499.45v-.5zM166.5 315.0v.5H499.45v-.5zM166.5 312.0v.5H499.45v-.5zM166.5 309.0v.5H499.45v-.5zM166.5 305.5v.5H499.45v-.5zM166.5 302.5v.5H499.45v-.5zM166.5 299.5v.5H499.45v-.5zM166.5 296.5v.5H499.45v-.5zM166.5 293.0v.5H499.45v-.5zM166.5 290.0v.5H499.45v-.5zM166.5 287.0v.5H499.45v-.5zM166.5 284.0v.5H499.45v-.5zM166.5 280.5v.5H499.45v-.5zM166.5 277.5v.5H499.45v-.5zM166.5 274.5v.5H499.45v-.5zM166.5 271.5v.5H499.45v-.5zM166.5 268.0v.5H499.45v-.5zM166.5 265.0v.5H499.45v-.5zM166.5 262.0v.5H499.45v-.5zM166.5 259.0v.5H499.45v-.5zM166.5 255.5v.5H499.45v-.5zM166.5 252.5v.5H499.45v-.5zM166.5 249.5v.5H499.45v-.5zM166.5 246.5v.5H499.45v-.5zM166.5 243.0v.5H499.45v-.5zM166.5 240.0v.5H499.45v-.5zM166.5 237.0v.5H499.45v-.5zM166.5 234.0v.5H499.45v-.5zM166.5 230.5v.5H499.45v-.5zM166.5 227.5v.5H499.45v-.5zM166.5 224.5v.5H499.45v-.5zM166.5 221.5v.5H499.45v-.5zM166.5 218.0v.5H499.45v-.5zM166.5 215.0v.5H499.45v-.5zM166.5 212.0v.5H499.45v-.5zM166.5 209.0v.5H499.45v-.5zM166.5 205.5v.5H499.45v-.5zM166.5 202.5v.5H499.45v-.5zM166.5 199.5v.5H499.45v-.5zM166.5 196.5v.5H499.45v-.5zM166.5 193.0v.5H499.45v-.5zM166.5 190.0v.5H499.45v-.5zM166.5 187.0v.5H499.45v-.5zM166.5 184.0v.5H499.45v-.5zM166.5 180.5v.5H499.45v-.5zM166.5 177.5v.5H499.45v-.5zM166.5 174.5v.5H499.45v-.5zM166.5 171.5v.5H499.45v-.5zM166.5 168.0v.5H499.45v-.5zM166.5 165.0v.5H499.45v-.5zM166.5 162.0v.5H499.45v-.5zM166.5 159.0v.5H499.45v-.5zM166.5 155.5v.5H499.45v-.5zM166.5 152.5v.5H499.45v-.5zM166.5 149.5v.5H499.45v-.5zM166.5 146.5v.5H499.45v-.5zM166.5 143.0v.5H499.45v-.5zM166.5 140.0v.5H499.45v-.5zM166.5 137.0v.5H499.45v-.5zM166.5 134.0v.5H499.45v-.5zM166.5 130.5v.5H499.45v-.5zM166.5 127.5v.5H499.45v-.5zM166.5 124.5v.5H499.45v-.5zM166.5 121.5v.5H499.45v-.5zM166.5 118.0v.5H499.45v-.5zM166.5 115.0v.5H499.45v-.5zM166.5 112.0v.5H499.45v-.5zM166.5 109.0v.5H499.45v-.5zM166.5 105.5v.5H499.45v-.5zM166.5 102.5v.5H499.45v-.5zM166.5 99.5v.5H499.45v-.5zM166.5 96.5v.5H499.45v-.5zM166.5 93.0v.5H499.45v-.5zM166.5 90.0v.5H499.45v-.5zM166.5 87.0v.5H499.45v-.5zM166.5 84.0v.5H499.45v-.5zM166.5 80.5v.5H499.45v-.5zM166.5 77.5v.5H499.45v-.5z" fill="#000" fill-opacity=".27"/>
<g fill="none" stroke="#101010" stroke-width="0.9">
<path d="M314.00 355.40L325.50 358.60M325.00 352.50L327.50 360.00M325.00 352.50L323.80 357.00M318.00 374.00L325.50 374.00M324.50 374.00L322.00 381.00M322.00 381.00L321.40 378.00"/>
<path d="M361.5 76.00V102.40M366.5 76.00V102.40M361.70 102.5H366.30M361.5 120.00V218.00M366.5 120.00V200.30M349.5 125.00V154.00M353.5 108.00V154.00M349.5 170.00V268.00M353.5 170.00V250.30M336.5 175.00V204.00M341.5 158.00V204.00M336.5 220.00V318.00M341.5 220.00V300.30M324.5 225.00V254.00M328.5 208.00V254.00M324.5 270.00V368.00M328.5 270.00V350.30M311.5 275.00V304.00M316.5 258.00V304.00M311.5 320.00V418.00M316.5 320.00V400.30M299.5 325.00V354.00M303.5 308.00V354.00M299.5 370.00V405.00M303.5 370.00V405.00M369.98 103.5H374.38M288.93 427.5H293.32M226.00 104.5H361.70M244.50 111.5H361.70M226.00 119.5H361.70M226.00 154.5H349.20M244.50 161.5H349.20M226.00 169.5H349.20M226.00 204.5H336.70M244.50 211.5H336.70M226.00 219.5H336.70M226.00 254.5H324.20M244.50 261.5H324.20M226.00 269.5H324.20M226.00 304.5H311.70M244.50 311.5H311.70M226.00 319.5H311.70M226.00 305.5H311.70M226.00 355.5H299.20M373.90 105.5H442.50M372.07 112.5H435.50M370.22 120.5H442.50M361.40 155.5H442.50M359.57 162.5H435.50M357.72 170.5H442.50M348.90 205.5H442.50M347.07 212.5H435.50M345.22 220.5H442.50M336.40 255.5H442.50M334.57 262.5H435.50M332.67 270.5H386.00M323.88 305.5H386.00M322.17 312.5H383.80M320.47 319.5H386.00M311.42 355.5H387.00M226.00 354.5H298.90M244.50 362.5H298.90M226.00 369.5H298.90M226.00 387.5H367.50M226.00 405.5H442.50M226.00 421.5H299.60M262.50 428.5H339.50M282.00 413.5H291.50M230.5 104.30V429.20M249.5 111.80V404.60M301.5 147.00V354.00M432.5 112.60V405.00M438.5 105.30V405.00M382.5 270.20V405.00M377.5 312.20V405.00M316.5 370.00V400.50M285.5 397.50V405.00M285.5 413.50V421.30M292.20 150.5H301.50M359.58 150.5H366.58M292.20 175.5H301.50M355.92 175.5H362.92M292.20 200.5H301.50M347.08 200.5H354.08M292.20 224.5H301.50M343.42 224.5H350.42M292.20 250.5H301.50M334.58 250.5H341.58M292.20 274.5H301.50M330.92 274.5H337.92M292.20 300.5H301.50M322.08 300.5H329.08M292.20 323.5H301.50M318.42 323.5H325.42M290.10 344.5H299.40M311.88 344.5H318.88M290.10 378.5H299.40M305.92 378.5H312.92M316.30 402.5H323.50" stroke-width="1" stroke-opacity=".9" shape-rendering="crispEdges"/>
<path d="M364.5 76.00V102.40M364.5 120.00V209.50M351.5 116.00V154.00M351.5 170.00V259.50M339.5 166.00V204.00M339.5 220.00V309.50M326.5 216.00V254.00M326.5 270.00V359.50M314.5 266.00V304.00M314.5 320.00V409.50M301.5 316.00V354.00M301.5 370.00V462.00" stroke-width="1" stroke-dasharray="3 1.5" shape-rendering="crispEdges"/>
<path d="M369.98 103.4L374.38 103.4L293.32 427.6L288.93 427.6Z" fill="#000" fill-opacity=".08" stroke="none"/>
<path d="M369.98 103.40L288.93 427.60M374.38 103.40L293.32 427.60" stroke-width="1.3" stroke-dasharray="3.6 1.2"/>
<path d="" stroke-width="1.25"/>
<path d="M370.53 103.60L373.93 103.60L369.57 121.00L366.18 121.00ZM358.03 153.60L361.43 153.60L357.07 171.00L353.68 171.00ZM345.53 203.60L348.93 203.60L344.57 221.00L341.18 221.00ZM333.03 253.60L336.43 253.60L332.07 271.00L328.68 271.00ZM320.53 303.60L323.93 303.60L319.57 321.00L316.18 321.00ZM308.03 353.60L311.43 353.60L307.07 371.00L303.68 371.00Z" stroke-width="1.25" fill="#fff"/>
</g>
<rect x="361.75" y="103.50" width="4.2" height="16.60" fill="#0c0c0c"/><rect x="363.25" y="105.20" width="1.25" height="13.20" fill="#fff"/><rect x="349.25" y="153.50" width="4.2" height="16.60" fill="#0c0c0c"/><rect x="350.75" y="155.20" width="1.25" height="13.20" fill="#fff"/><rect x="336.75" y="203.50" width="4.2" height="16.60" fill="#0c0c0c"/><rect x="338.25" y="205.20" width="1.25" height="13.20" fill="#fff"/><rect x="324.25" y="253.50" width="4.2" height="16.60" fill="#0c0c0c"/><rect x="325.75" y="255.20" width="1.25" height="13.20" fill="#fff"/><rect x="311.75" y="303.50" width="4.2" height="16.60" fill="#0c0c0c"/><rect x="313.25" y="305.20" width="1.25" height="13.20" fill="#fff"/><rect x="299.25" y="353.50" width="4.2" height="16.60" fill="#0c0c0c"/><rect x="300.75" y="355.20" width="1.25" height="13.20" fill="#fff"/>
<path d="M299.70 405V462M303.50 405V462" stroke="#000" stroke-opacity=".6" stroke-width=".8" fill="none"/>
<rect x="300.6" y="406.5" width="2.4" height="14" fill="#9a9a9a"/>
<path d="M230.50 104.30L229.20 109.10L231.80 109.10ZM230.50 119.40L229.20 124.20L231.80 124.20ZM249.00 111.80L247.70 116.60L250.30 116.60ZM230.50 154.30L229.20 159.10L231.80 159.10ZM230.50 169.40L229.20 174.20L231.80 174.20ZM249.00 161.80L247.70 166.60L250.30 166.60ZM230.50 204.30L229.20 209.10L231.80 209.10ZM230.50 219.40L229.20 224.20L231.80 224.20ZM249.00 211.80L247.70 216.60L250.30 216.60ZM230.50 254.30L229.20 259.10L231.80 259.10ZM230.50 269.40L229.20 274.20L231.80 274.20ZM249.00 261.80L247.70 266.60L250.30 266.60ZM230.50 304.30L229.20 309.10L231.80 309.10ZM230.50 319.40L229.20 324.20L231.80 324.20ZM249.00 311.80L247.70 316.60L250.30 316.60ZM230.50 354.30L229.20 359.10L231.80 359.10ZM230.50 369.40L229.20 374.20L231.80 374.20ZM249.00 362.00L247.70 366.80L250.30 366.80ZM230.50 387.30L229.20 392.10L231.80 392.10ZM230.50 405.00L229.20 400.20L231.80 400.20ZM230.50 405.00L229.20 409.80L231.80 409.80ZM230.50 421.30L229.20 426.10L231.80 426.10ZM249.00 404.80L247.70 400.00L250.30 400.00ZM438.00 105.30L436.70 110.10L439.30 110.10ZM432.50 112.60L431.20 117.40L433.80 117.40ZM438.00 120.00L436.70 124.80L439.30 124.80ZM438.00 155.30L436.70 160.10L439.30 160.10ZM432.50 162.60L431.20 167.40L433.80 167.40ZM438.00 170.00L436.70 174.80L439.30 174.80ZM438.00 205.30L436.70 210.10L439.30 210.10ZM432.50 212.60L431.20 217.40L433.80 217.40ZM438.00 220.00L436.70 224.80L439.30 224.80ZM438.00 255.30L436.70 260.10L439.30 260.10ZM432.50 262.60L431.20 267.40L433.80 267.40ZM382.50 270.20L381.20 275.00L383.80 275.00ZM382.50 305.40L381.20 310.20L383.80 310.20ZM382.50 319.00L381.20 323.80L383.80 323.80ZM382.50 355.20L381.20 360.00L383.80 360.00ZM377.00 312.20L375.70 317.00L378.30 317.00ZM377.00 355.20L375.70 360.00L378.30 360.00ZM432.50 405.00L431.20 400.20L433.80 400.20ZM438.00 405.00L436.70 400.20L439.30 400.20ZM382.50 405.00L381.20 400.20L383.80 400.20ZM377.00 405.00L375.70 400.20L378.30 400.20ZM285.60 397.40L284.10 401.60L287.10 401.60ZM285.60 421.20L284.10 417.00L287.10 417.00ZM301.50 151.00L296.30 149.85L296.30 152.15ZM359.58 150.90L363.78 149.80L363.78 152.00ZM301.50 176.20L296.30 175.05L296.30 177.35ZM355.92 176.10L360.12 175.00L360.12 177.20ZM301.50 200.50L296.30 199.35L296.30 201.65ZM347.08 200.40L351.28 199.30L351.28 201.50ZM301.50 224.70L296.30 223.55L296.30 225.85ZM343.42 224.60L347.62 223.50L347.62 225.70ZM301.50 250.50L296.30 249.35L296.30 251.65ZM334.58 250.40L338.78 249.30L338.78 251.50ZM301.50 275.00L296.30 273.85L296.30 276.15ZM330.92 274.90L335.12 273.80L335.12 276.00ZM301.50 300.50L296.30 299.35L296.30 301.65ZM322.08 300.40L326.28 299.30L326.28 301.50ZM301.50 324.10L296.30 322.95L296.30 325.25ZM318.42 324.00L322.62 322.90L322.62 325.10ZM299.40 344.50L294.20 343.35L294.20 345.65ZM311.88 344.40L316.08 343.30L316.08 345.50ZM299.40 378.50L294.20 377.35L294.20 379.65ZM305.92 378.40L310.12 377.30L310.12 379.50ZM316.60 403.20L320.80 402.00L320.80 404.40Z" fill="#000"/>
<g font-family='"Liberation Sans", sans-serif' font-size="9.0" fill="#000" stroke="#000" stroke-width=".18">
<text transform="translate(187.8 102.7) scale(0.87 1)">96493 mm</text><text transform="translate(187.8 119.0) scale(0.87 1)">91653 mm</text><text transform="translate(185.5 155.8) scale(0.87 1)">80493 mm</text><text transform="translate(185.0 172.6) scale(0.87 1)">75653 mm</text><text transform="translate(185.5 205.2) scale(0.87 1)">64493 mm</text><text transform="translate(184.5 219.6) scale(0.87 1)">59653 mm</text><text transform="translate(186.0 256.9) scale(0.87 1)">48493 mm</text><text transform="translate(184.5 271.6) scale(0.87 1)">43653 mm</text><text transform="translate(187.5 299.6) scale(0.87 1)">32493 mm</text><text transform="translate(185.5 307.8) scale(0.87 1)">32174 mm</text><text transform="translate(185.5 322.1) scale(0.87 1)">27653 mm</text><text transform="translate(184.5 353.8) scale(0.87 1)">16493 mm</text><text transform="translate(184.5 362.1) scale(0.87 1)">16174 mm</text><text transform="translate(185.5 372.1) scale(0.87 1)">11653 mm</text><text transform="translate(187.5 390.2) scale(0.87 1)">5826 mm</text><text transform="translate(187.5 423.8) scale(0.87 1)">4840 mm</text><text transform="translate(254.5 111.2) scale(0.87 1)">94073 mm</text><text transform="translate(252.5 161.2) scale(0.87 1)">78073 mm</text><text transform="translate(253.0 211.2) scale(0.87 1)">62073 mm</text><text transform="translate(251.0 261.2) scale(0.87 1)">46073 mm</text><text transform="translate(251.0 311.2) scale(0.87 1)">30073 mm</text><text transform="translate(252.5 362.8) scale(0.87 1)">13826 mm</text><text transform="translate(258.0 347.1) scale(0.87 1)">2587 mm</text><text transform="translate(258.8 381.2) scale(0.87 1)">1413 mm</text><text transform="translate(244.5 417.1) scale(0.87 1)">2420 mm</text><text transform="translate(438.8 103.2) scale(0.87 1)">96174 mm</text><text transform="translate(438.0 118.8) scale(0.87 1)">91479 mm</text><text transform="translate(386.0 112.0) scale(0.87 1)">93826 mm</text><text transform="translate(442.5 154.1) scale(0.87 1)">80174 mm</text><text transform="translate(378.8 153.8) scale(0.87 1)">18587 mm</text><text transform="translate(385.0 162.1) scale(0.87 1)">77826 mm</text><text transform="translate(443.8 169.2) scale(0.87 1)">75479 mm</text><text transform="translate(374.5 179.2) scale(0.87 1)">17413 mm</text><text transform="translate(367.0 202.8) scale(0.87 1)">14587 mm</text><text transform="translate(442.5 207.8) scale(0.87 1)">64174 mm</text><text transform="translate(380.0 212.8) scale(0.87 1)">61826 mm</text><text transform="translate(443.8 222.1) scale(0.87 1)">59479 mm</text><text transform="translate(363.0 227.2) scale(0.87 1)">13413 mm</text><text transform="translate(352.5 253.2) scale(0.87 1)">10587 mm</text><text transform="translate(444.0 254.1) scale(0.87 1)">48174 mm</text><text transform="translate(375.0 262.6) scale(0.87 1)">45826 mm</text><text transform="translate(388.5 272.2) scale(0.87 1)">43479 mm</text><text transform="translate(347.5 278.8) scale(0.87 1)">9413 mm</text><text transform="translate(340.0 304.1) scale(0.87 1)">6587 mm</text><text transform="translate(389.5 307.8) scale(0.87 1)">32174 mm</text><text transform="translate(339.5 313.2) scale(0.87 1)">29826 mm</text><text transform="translate(390.0 319.2) scale(0.87 1)">27479 mm</text><text transform="translate(336.0 327.8) scale(0.87 1)">5413 mm</text><text transform="translate(391.2 350.2) scale(0.87 1)">16000 mm</text><text transform="translate(317.0 369.2) scale(0.87 1)">4840 mm</text><text transform="translate(323.0 406.2) scale(0.87 1)">4000 mm</text><text x="406.6" y="441" font-size="20">1:4</text>
</g>
</svg></div>
<div class="abs" style="left:0;top:0;width:640px;height:482px;pointer-events:none"><svg id="rul" width="640" height="482" viewBox="0 0 640 482">
<rect x="30" y="68" width="601" height="7.6" fill="#efede0"/>
<rect x="29.6" y="68" width="6.4" height="401.5" fill="#efede0"/>
<rect x="28" y="66.55" width="603" height="1.7" fill="#000"/>
<rect x="28" y="66.55" width="1.5" height="403.1" fill="#000"/>
<rect x="36" y="75" width="595" height="1" fill="#55534a"/>
<rect x="35.4" y="75" width="1" height="386.5" fill="#55534a"/>
<g font-family='"Liberation Sans", sans-serif' font-size="4.5" fill="#000" stroke="#000" stroke-width=".12"><rect x="39.00" y="68" width="1" height="7.5" fill="#9d9a8c"/><text x="40.70" y="71.9">-40 m</text><rect x="70.25" y="68" width="1" height="7.5" fill="#9d9a8c"/><text x="71.95" y="71.9">-30 m</text><rect x="101.50" y="68" width="1" height="7.5" fill="#9d9a8c"/><text x="103.20" y="71.9">-20 m</text><rect x="132.75" y="68" width="1" height="7.5" fill="#9d9a8c"/><text x="134.45" y="71.9">-10 m</text><rect x="164.00" y="68" width="1" height="7.5" fill="#9d9a8c"/><text x="165.70" y="71.9">0 m</text><rect x="195.25" y="68" width="1" height="7.5" fill="#9d9a8c"/><text x="196.95" y="71.9">10 m</text><rect x="226.50" y="68" width="1" height="7.5" fill="#9d9a8c"/><text x="228.20" y="71.9">20 m</text><rect x="257.75" y="68" width="1" height="7.5" fill="#9d9a8c"/><text x="259.45" y="71.9">30 m</text><rect x="289.00" y="68" width="1" height="7.5" fill="#9d9a8c"/><text x="290.70" y="71.9">40 m</text><rect x="320.25" y="68" width="1" height="7.5" fill="#9d9a8c"/><text x="321.95" y="71.9">50 m</text><rect x="351.50" y="68" width="1" height="7.5" fill="#9d9a8c"/><text x="353.20" y="71.9">60 m</text><rect x="382.75" y="68" width="1" height="7.5" fill="#9d9a8c"/><text x="384.45" y="71.9">70 m</text><rect x="414.00" y="68" width="1" height="7.5" fill="#9d9a8c"/><text x="415.70" y="71.9">80 m</text><rect x="445.25" y="68" width="1" height="7.5" fill="#9d9a8c"/><text x="446.95" y="71.9">90 m</text><rect x="476.50" y="68" width="1" height="7.5" fill="#9d9a8c"/><text x="478.20" y="71.9">100 m</text><rect x="507.75" y="68" width="1" height="7.5" fill="#9d9a8c"/><text x="509.45" y="71.9">110 m</text><rect x="539.00" y="68" width="1" height="7.5" fill="#9d9a8c"/><text x="540.70" y="71.9">120 m</text><rect x="570.25" y="68" width="1" height="7.5" fill="#9d9a8c"/><text x="571.95" y="71.9">130 m</text><rect x="601.50" y="68" width="1" height="7.5" fill="#9d9a8c"/><text x="603.20" y="71.9">140 m</text><rect x="30" y="79.50" width="6" height="1" fill="#9d9a8c"/><text transform="translate(33.4 79.20) rotate(-90)">130 m</text><rect x="30" y="110.75" width="6" height="1" fill="#9d9a8c"/><text transform="translate(33.4 110.45) rotate(-90)">120 m</text><rect x="30" y="142.00" width="6" height="1" fill="#9d9a8c"/><text transform="translate(33.4 141.70) rotate(-90)">110 m</text><rect x="30" y="173.25" width="6" height="1" fill="#9d9a8c"/><text transform="translate(33.4 172.95) rotate(-90)">100 m</text><rect x="30" y="204.50" width="6" height="1" fill="#9d9a8c"/><text transform="translate(33.4 204.20) rotate(-90)">90 m</text><rect x="30" y="235.75" width="6" height="1" fill="#9d9a8c"/><text transform="translate(33.4 235.45) rotate(-90)">80 m</text><rect x="30" y="267.00" width="6" height="1" fill="#9d9a8c"/><text transform="translate(33.4 266.70) rotate(-90)">70 m</text><rect x="30" y="298.25" width="6" height="1" fill="#9d9a8c"/><text transform="translate(33.4 297.95) rotate(-90)">60 m</text><rect x="30" y="329.50" width="6" height="1" fill="#9d9a8c"/><text transform="translate(33.4 329.20) rotate(-90)">50 m</text><rect x="30" y="360.75" width="6" height="1" fill="#9d9a8c"/><text transform="translate(33.4 360.45) rotate(-90)">40 m</text><rect x="30" y="392.00" width="6" height="1" fill="#9d9a8c"/><text transform="translate(33.4 391.70) rotate(-90)">30 m</text><rect x="30" y="423.25" width="6" height="1" fill="#9d9a8c"/><text transform="translate(33.4 422.95) rotate(-90)">20 m</text><rect x="30" y="454.50" width="6" height="1" fill="#9d9a8c"/><text transform="translate(33.4 454.20) rotate(-90)">10 m</text></g>
<circle cx="32.5" cy="71.5" r="2.5" fill="#16266e"/><circle cx="31.8" cy="70.7" r="1" fill="#6f8fd8"/><path d="M30.4 76.6h2M30.4 78.2h2.6" stroke="#222" stroke-width=".6"/>
<path d="M293.6 75.6l1.7-2.3h-3.4z" fill="#c00020"/>
<path d="M36 448.8l-2.3-1.7v3.4z" fill="#c00020"/>
</svg></div>
<!-- scrollbars -->
<div class="abs" style="left:630.4px;top:68px;width:9.6px;height:394px;background:#f7f6f1"></div>
<div class="abs" style="left:630.4px;top:68.2px;width:8.4px;height:11px;background:#ece9d8"></div>
<div class="abs" style="left:631px;top:70.4px;width:6.6px;height:1.2px;background:#222"></div>
<svg class="ic" style="left:632.8px;top:74.2px" width="4.6" height="3" viewBox="0 0 5 4"><path d="M.2 3.6h4.6l-2.3-3.4z" fill="#111"/></svg>
<div class="abs" style="left:638.5px;top:66.6px;width:.9px;height:13.2px;background:#000"></div>
<div class="abs" style="left:630.4px;top:79px;width:9px;height:.9px;background:#000"></div>
<div class="abs" style="left:630px;top:66.55px;width:9.4px;height:1.7px;background:#000"></div>
<div class="btn3" style="left:630.8px;top:453px;width:7.7px;height:8px"><svg class="ic" style="left:1.1px;top:2px" width="4.4" height="3.2" viewBox="0 0 5 4"><path d="M.2.4h4.6l-2.3 3.2z" fill="#111"/></svg></div>
<div class="btn3" style="left:630.8px;top:211.4px;width:7.7px;height:109px;border-right-color:#aca899;border-bottom-color:#aca899"></div>
<div class="abs" style="left:29.6px;top:461.2px;width:610.4px;height:8.4px;background:#f7f6f1"></div>
<div class="abs" style="left:630.5px;top:461.2px;width:9.5px;height:8.6px;background:#ece9d8"></div>
<div class="abs" style="left:29.6px;top:461.2px;width:11px;height:8.2px;background:#ece9d8"></div>
<div class="abs" style="left:31.9px;top:461.6px;width:.8px;height:7.6px;background:#333"></div>
<svg class="ic" style="left:35.2px;top:463.2px" width="3.2" height="4.4" viewBox="0 0 4 5"><path d="M3.6 .2v4.6l-3.4-2.3z" fill="#111"/></svg>
<div class="btn3" style="left:622.3px;top:461.6px;width:8.1px;height:7.6px"><svg class="ic" style="left:1.9px;top:1.2px" width="3.2" height="4.4" viewBox="0 0 4 5"><path d="M.4.2v4.6l3.4-2.3z" fill="#111"/></svg></div>
<div class="btn3" style="left:161px;top:461.6px;width:341.2px;height:7.4px;border-right-color:#aca899;border-bottom-color:#aca899"></div>
<div class="abs" style="left:28px;top:468.8px;width:13.2px;height:.9px;background:#000"></div>
<div class="abs" style="left:40.4px;top:461.2px;width:.8px;height:8.4px;background:#000"></div>
<!-- status bar -->
<div class="sunk" style="left:501px;width:68px"></div><div class="sunk" style="left:571px;width:69px"></div>
<svg class="ic" style="left:0;top:470px" width="640" height="10" viewBox="0 0 640 10"><g font-family='"Liberation Sans", sans-serif' font-size="5.9" fill="#000" stroke="#000" stroke-width=".1">
<text x="1.9" y="8.2" textLength="51.1" lengthAdjust="spacingAndGlyphs">[Select Direct] Ready</text>
<text x="502.1" y="8.2" textLength="51.7" lengthAdjust="spacingAndGlyphs">41500 mm, 12500 mm</text>
<text x="572" y="8.2" textLength="54" lengthAdjust="spacingAndGlyphs">27078 mm, -14066 mm</text>
</g></svg>
<div class="abs" style="left:0;top:479.1px;width:640px;height:.6px;background:#f8f7f0"></div><div class="abs" style="left:0;top:479.7px;width:640px;height:2.3px;background:linear-gradient(#3f8cf3,#1f66dc 60%,#1b5fd0)"></div>
</div></body></html>
